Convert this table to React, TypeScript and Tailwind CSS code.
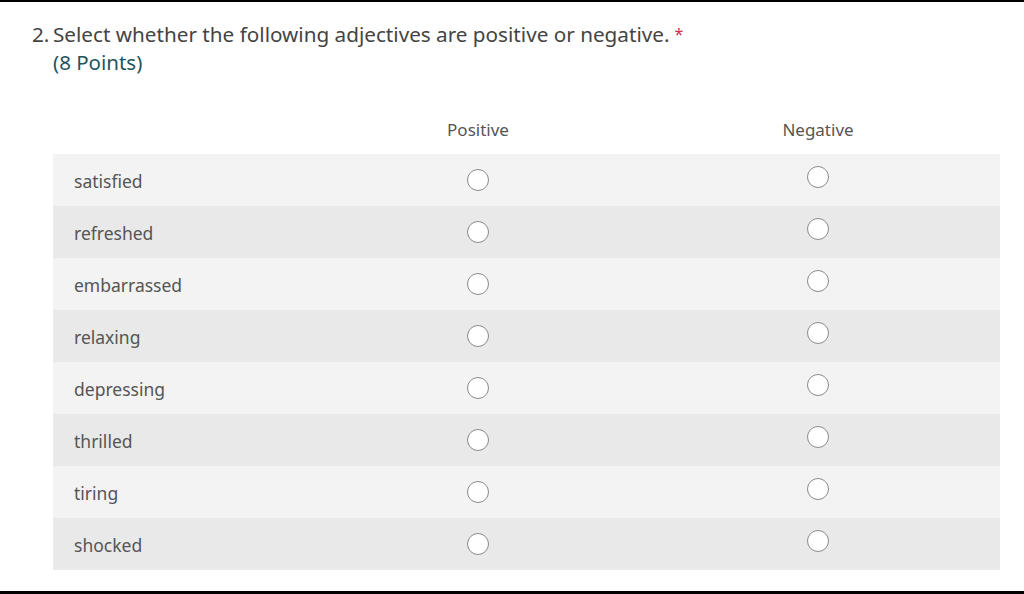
const rows = [
  "satisfied",
  "refreshed",
  "embarrassed",
  "relaxing",
  "depressing",
  "thrilled",
  "tiring",
  "shocked",
];

function Radio({ className = "" }: { className?: string }) {
  return (
    <span
      className={`block w-[22px] h-[22px] rounded-full border-[1.5px] border-[#8a8a8a] bg-white ${className}`}
    />
  );
}

export default function App() {
  return (
    <div
      className="w-[1024px] h-[594px] bg-white flex flex-col overflow-hidden text-[#555]"
      style={{ fontFamily: "'Noto Sans', 'Open Sans', sans-serif" }}
    >
      <div className="h-[2px] bg-black" />
      <div className="flex-1 pl-[32px] pt-[18px]">
        {/* Question title */}
        <div className="flex text-[20.7px] leading-[28px] text-[#444]">
          <span className="w-[21px]">2.</span>
          <span>
            Select whether the following adjectives are positive or negative.
            <span className="text-[#c4314b] text-[16px] align-top ml-[5px]">*</span>
          </span>
        </div>
        <div className="pl-[21px] text-[20.5px] leading-[28px] text-[#24545e]">(8 Points)</div>

        {/* Likert table */}
        <div className="ml-[21px] mt-[41px] w-[947px]">
          <div className="grid grid-cols-[255px_340px_340px_12px] h-[37px] items-start text-[17px] text-[#555]">
            <span />
            <span className="text-center">Positive</span>
            <span className="text-center">Negative</span>
            <span />
          </div>
          {rows.map((r, i) => (
            <div
              key={r}
              className={`grid grid-cols-[255px_340px_340px_12px] h-[52px] items-center text-[17.5px] ${
                i % 2 === 0 ? "bg-[#f3f3f3]" : "bg-[#e9e9e9]"
              }`}
            >
              <span className="pl-[21px] pt-[2px] text-[#555]">{r}</span>
              <span className="flex justify-center">
                <Radio />
              </span>
              <span className="flex justify-center">
                <Radio className="-mt-[6px]" />
              </span>
              <span />
            </div>
          ))}
        </div>
      </div>
      <div className="h-[3px] bg-black" />
    </div>
  );
}
